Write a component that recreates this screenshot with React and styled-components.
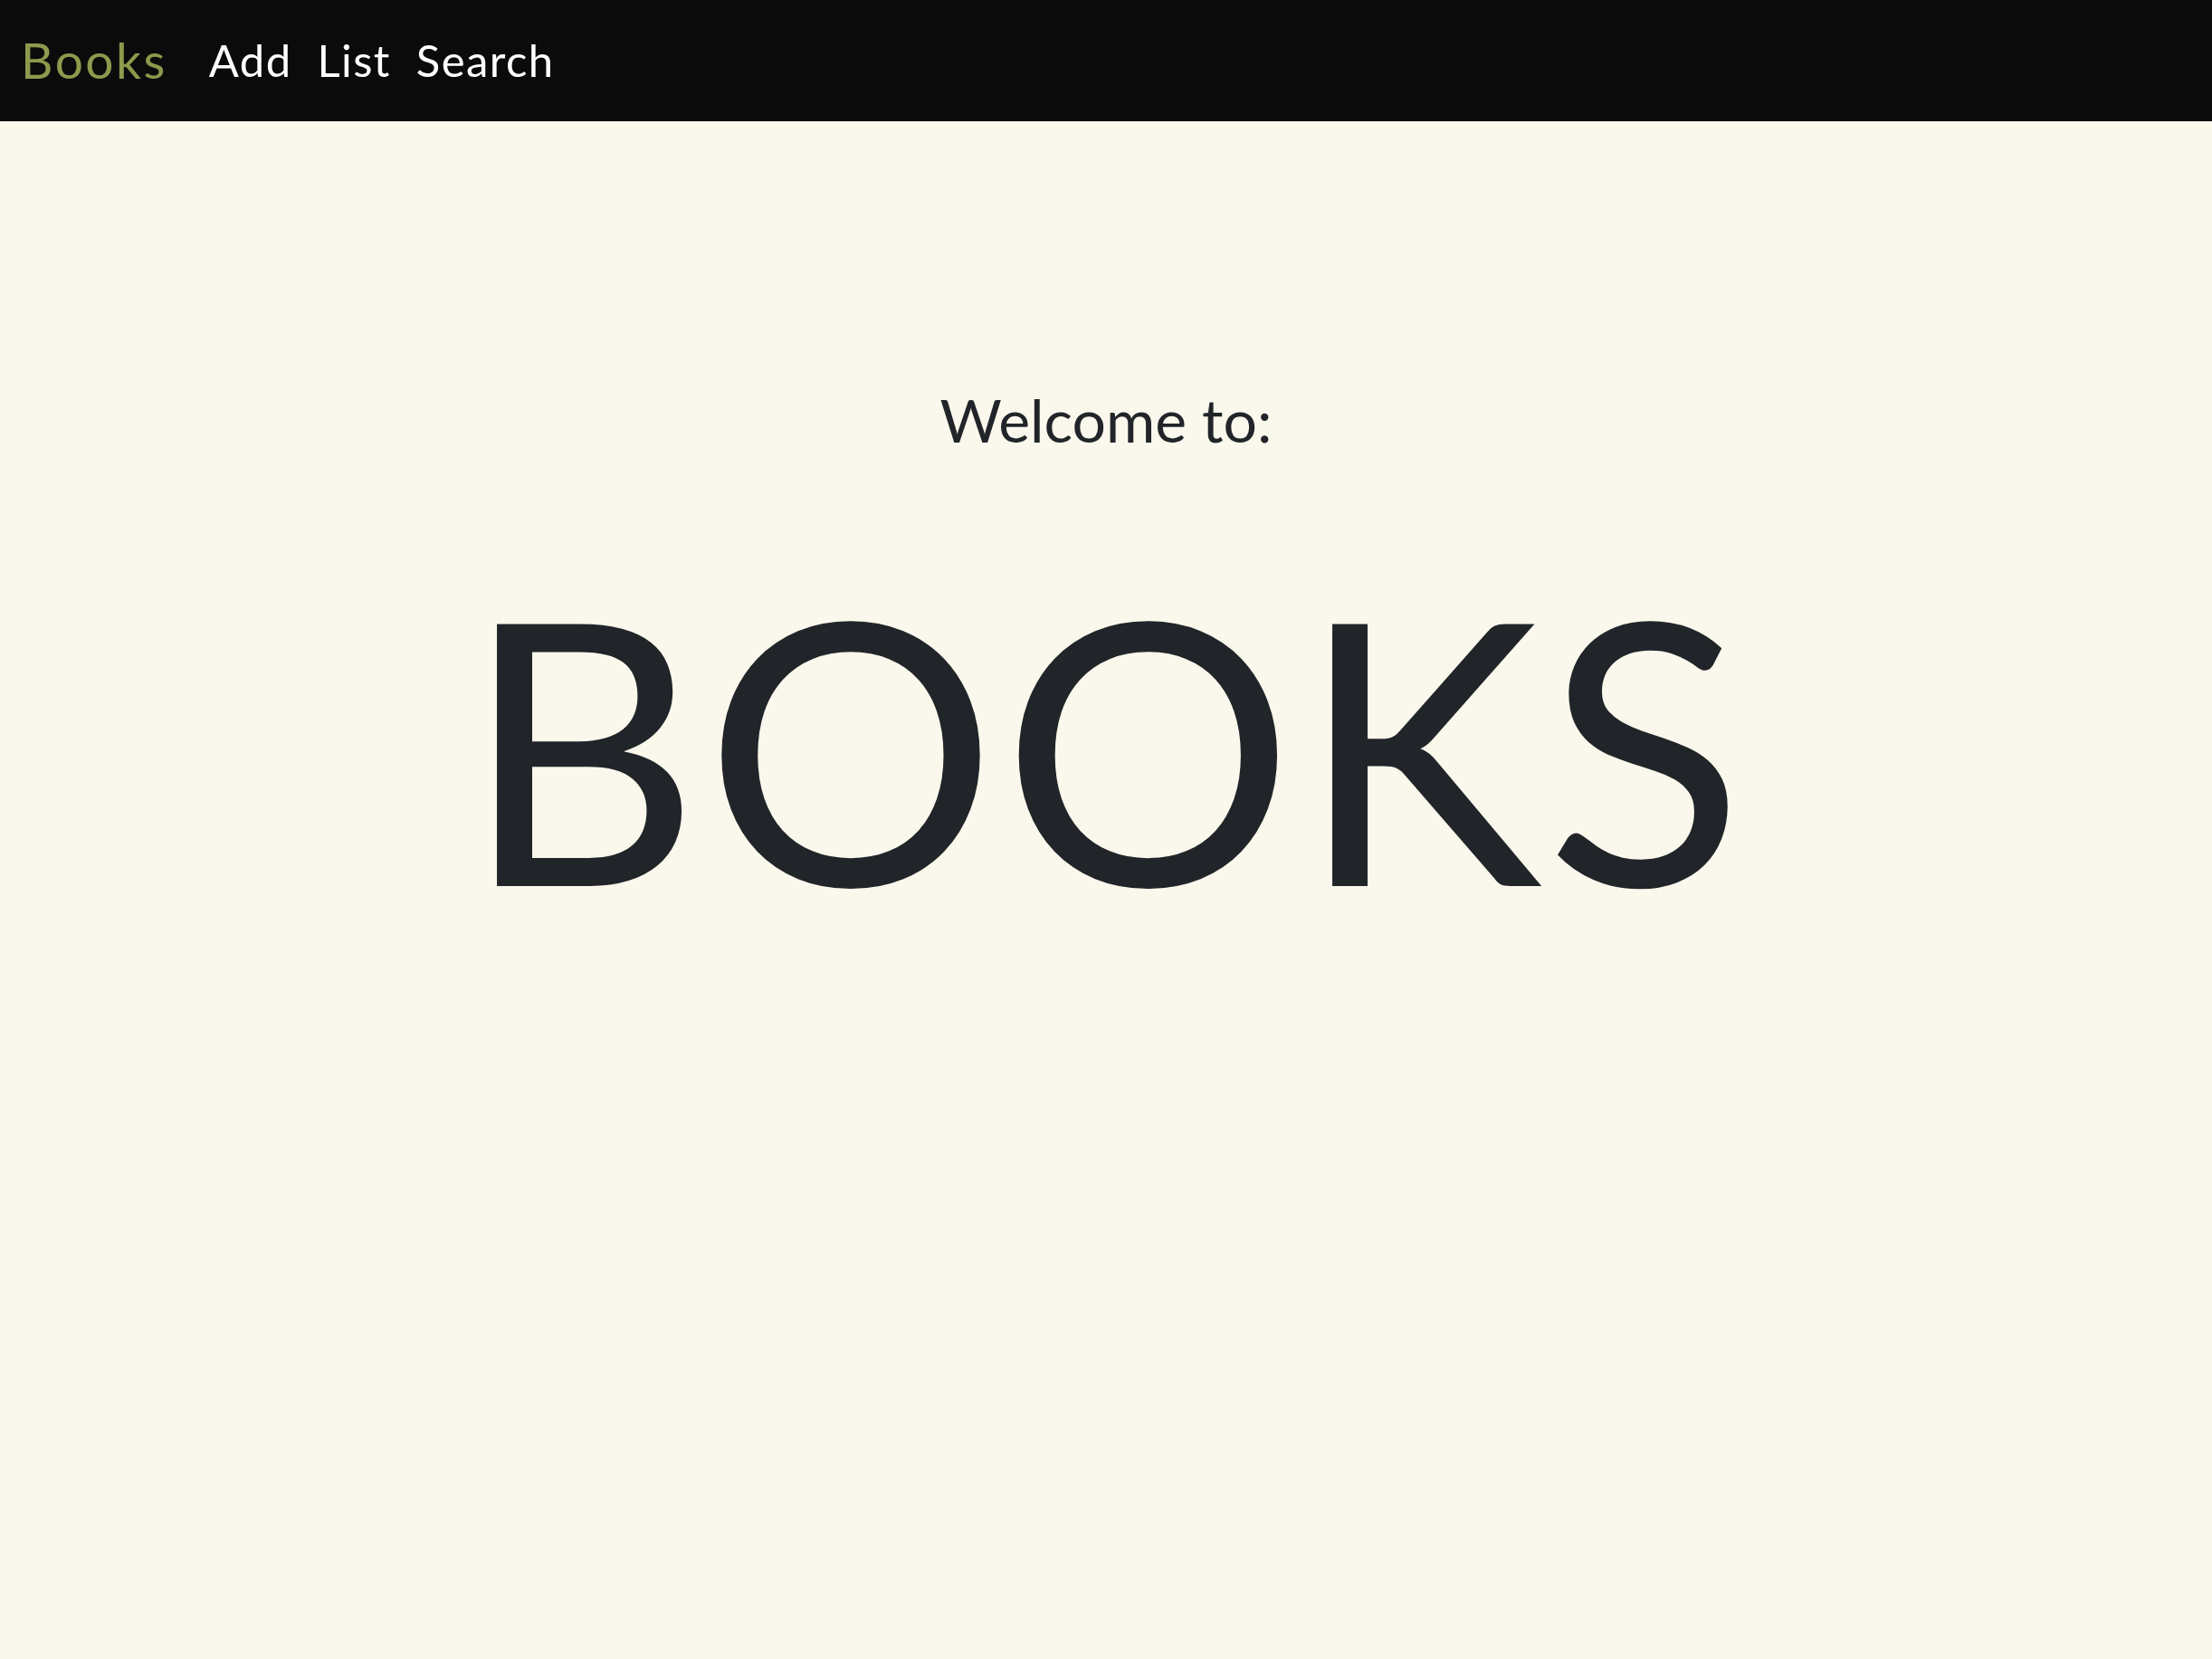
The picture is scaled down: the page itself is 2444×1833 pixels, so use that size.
import styled, { createGlobalStyle } from "styled-components";

const GlobalStyle = createGlobalStyle`
  * {
    box-sizing: border-box;
  }
  body {
    margin: 0;
    background-color: #faf8ec;
    font-family: "Lato", "Open Sans", sans-serif;
    color: #212529;
  }
`;

export default function App() {
  return (
    <>
      <GlobalStyle />
      <StyledNav>
        <StyledBrand href="#">Books</StyledBrand>
        <StyledLinks>
          <a href="#">Add</a>
          <a href="#">List</a>
          <a href="#">Search</a>
        </StyledLinks>
      </StyledNav>
      <StyledMain>
        <StyledWelcome>Welcome to:</StyledWelcome>
        <StyledTitle>BOOKS</StyledTitle>
      </StyledMain>
    </>
  );
}

const StyledNav = styled.nav`
  height: 134px;
  display: flex;
  align-items: center;
  gap: 46px;
  padding: 0 23px 2px;
  background-color: #0c0b0c;
`;

const StyledBrand = styled.a`
  color: #8d9a4d;
  font-size: 55px;
  letter-spacing: 2.5px;
  text-decoration: none;
`;

const StyledLinks = styled.div`
  display: flex;
  gap: 28px;
  a {
    color: #ffffff;
    font-size: 49px;
    letter-spacing: 1.4px;
    text-decoration: none;
  }
`;

const StyledMain = styled.main`
  display: flex;
  flex-direction: column;
  align-items: center;
  padding-top: 290px;
`;

const StyledWelcome = styled.h2`
  margin: 0;
  font-size: 66px;
  font-weight: 400;
`;

const StyledTitle = styled.h1`
  margin: 118px 0 0;
  font-size: 404px;
  font-weight: 400;
  letter-spacing: 5px;
  line-height: 1;
`;
